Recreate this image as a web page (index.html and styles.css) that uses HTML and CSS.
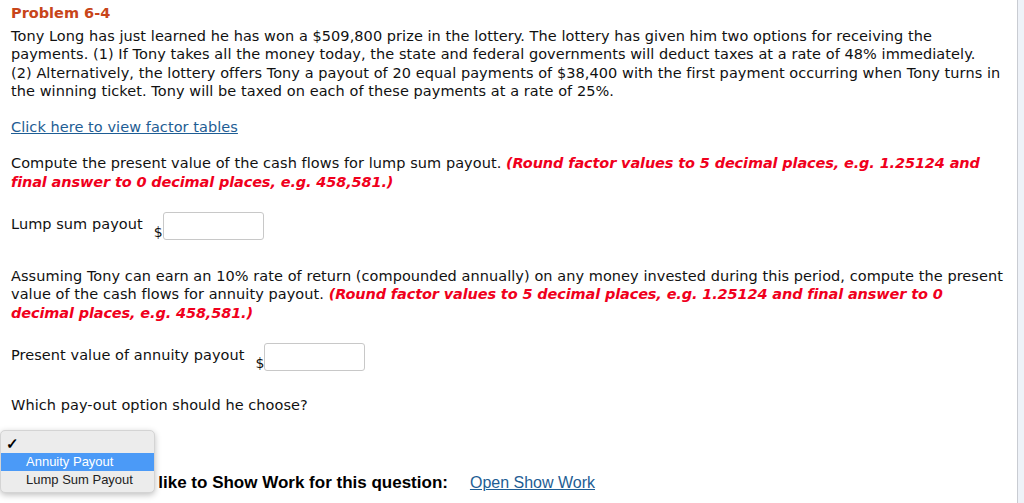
FILE: index.html
```html
<!DOCTYPE html>
<html>
<head>
<meta charset="utf-8">
<link rel="stylesheet" href="styles.css">
</head>
<body>
<div class="page">
  <div class="content">
    <h1 class="title">Problem 6-4</h1>
    <p class="intro">Tony Long has just learned he has won a $509,800 prize in the lottery. The lottery has given him two options for receiving the payments. (1) If Tony takes all the money today, the state and federal governments will deduct taxes at a rate of 48% immediately.<br>(2) Alternatively, the lottery offers Tony a payout of 20 equal payments of $38,400 with the first payment occurring when Tony turns in the winning ticket. Tony will be taxed on each of these payments at a rate of 25%.</p>
    <p class="link-row"><a class="link" href="#">Click here to view factor tables</a></p>
    <p class="question">Compute the present value of the cash flows for lump sum payout. <span class="hint">(Round factor values to 5 decimal places, e.g. 1.25124 and final answer to 0 decimal places, e.g. 458,581.)</span></p>
    <div class="answer-row">
      <span class="label">Lump sum payout</span>
      <span class="currency">$</span>
      <span class="box"></span>
    </div>
    <p class="question q2">Assuming Tony can earn an 10% rate of return (compounded annually) on any money invested during this period, compute the present value of the cash flows for annuity payout. <span class="hint">(Round factor values to 5 decimal places, e.g. 1.25124 and final answer to 0<br>decimal places, e.g. 458,581.)</span></p>
    <div class="answer-row">
      <span class="label">Present value of annuity payout</span>
      <span class="currency">$</span>
      <span class="box"></span>
    </div>
    <p class="question q3">Which pay-out option should he choose?</p>
    <div class="show-work">
      <span class="sw-text">Would you like to Show Work for this question:</span>
      <a class="sw-link" href="#">Open Show Work</a>
    </div>
  </div>
  <div class="scroll-edge"></div>
  <div class="popup">
    <div class="opt check">&#10003;</div>
    <div class="opt selected">Annuity Payout</div>
    <div class="opt">Lump Sum Payout</div>
  </div>
</div>
</body>
</html>
```
FILE: styles.css
```css
html, body {
  margin: 0;
  padding: 0;
  background: #ffffff;
}
.page {
  position: relative;
  width: 1024px;
  height: 503px;
  overflow: hidden;
  display: flex;
}
.content {
  flex: 1;
  padding: 3px 0 0 11px;
  font-family: "DejaVu Sans", Verdana, sans-serif;
  font-size: 14.5px;
  line-height: 18.3px;
  letter-spacing: 0.06px;
  color: #111;
}
.title {
  margin: 0 0 4px;
  font-size: 14.5px;
  line-height: 20px;
  letter-spacing: 0;
  color: #c8451a;
  font-weight: bold;
}
.intro {
  margin: 0;
  width: 1000px;
}
.link-row {
  margin: 18px 0 0;
}
.link {
  color: #1e5d94;
  text-decoration: underline;
}
.question {
  margin: 18px 0 0;
  width: 1000px;
}
.hint {
  color: #f0001c;
  font-weight: bold;
  font-style: italic;
  letter-spacing: -0.13px;
}
.answer-row {
  display: flex;
  align-items: flex-start;
  margin-top: 19px;
}
.label {
  line-height: 18px;
  margin-top: 5px;
}
.currency {
  margin: 15px 0 0 11px;
  line-height: 14px;
  font-size: 14px;
}
.box {
  width: 99px;
  height: 26px;
  margin-top: 2px;
  border: 1px solid #c8c8c8;
  border-radius: 3px;
  background: #fff;
}
.q2 { margin-top: 27px; }
.q3 { margin-top: 25px; }
.show-work {
  margin-top: 60px;
  display: flex;
  align-items: baseline;
  font-family: "Liberation Sans", Arial, sans-serif;
  font-size: 17px;
  letter-spacing: 0;
  padding-left: 56px;
}
.sw-text {
  font-weight: bold;
  color: #000;
}
.sw-link {
  margin-left: 22px;
  font-size: 16px;
  color: #1e5d94;
  text-decoration: underline;
}
.scroll-edge {
  width: 6px;
  border-left: 1px solid #c9ccd2;
  background: #eef2f8;
}
.popup {
  position: absolute;
  left: 0;
  top: 430px;
  width: 155px;
  height: 63px;
  box-sizing: border-box;
  padding-top: 4px;
  background: #ececec;
  border: 1px solid #d4d4d4;
  border-radius: 5px;
  box-shadow: 0 2px 6px rgba(0,0,0,0.25);
  font-family: "Liberation Sans", Arial, sans-serif;
  font-size: 13px;
  color: #222;
}
.opt {
  height: 18px;
  line-height: 18px;
  padding-left: 25px;
}
.check {
  padding-left: 5px;
  font-size: 15px;
  font-weight: bold;
  color: #000;
}
.selected {
  background: #4b9af7;
  color: #fff;
}
```
